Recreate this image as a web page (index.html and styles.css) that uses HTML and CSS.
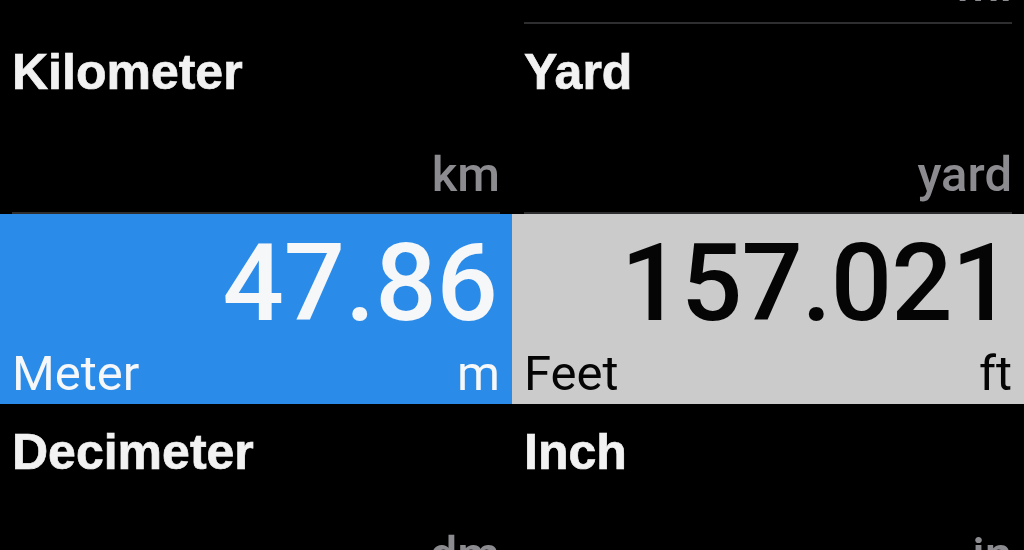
FILE: index.html
```html
<!DOCTYPE html>
<html lang="en">
<head>
<meta charset="utf-8">
<title>Length</title>
<link rel="stylesheet" href="styles.css">
</head>
<body>
<main class="units">
  <div class="cell cell-empty"></div>
  <div class="cell">
    <div class="cell-body">
      <div class="name">Mile</div>
      <div class="unit">mi</div>
    </div>
  </div>

  <div class="cell">
    <div class="cell-body">
      <div class="name">Kilometer</div>
      <div class="unit">km</div>
    </div>
  </div>
  <div class="cell">
    <div class="cell-body">
      <div class="name">Yard</div>
      <div class="unit">yard</div>
    </div>
  </div>

  <div class="cell cell-active">
    <div class="value">47.86</div>
    <div class="foot"><span class="label">Meter</span><span class="label">m</span></div>
  </div>
  <div class="cell cell-linked">
    <div class="value">157.021</div>
    <div class="foot"><span class="label">Feet</span><span class="label">ft</span></div>
  </div>

  <div class="cell">
    <div class="cell-body">
      <div class="name">Decimeter</div>
      <div class="unit">dm</div>
    </div>
  </div>
  <div class="cell">
    <div class="cell-body">
      <div class="name">Inch</div>
      <div class="unit">in</div>
    </div>
  </div>
</main>
</body>
</html>
```
FILE: styles.css
```css
html, body {
  margin: 0;
  padding: 0;
  background: #000;
  overflow: hidden;
}

body {
  width: 1024px;
  height: 550px;
  font-family: Roboto, "Liberation Sans", sans-serif;
}

/* two-column unit list, scrolled so the Mile row is mostly off the top */
.units {
  display: grid;
  grid-template-columns: 512px 512px;
  grid-auto-rows: 190px;
  margin-top: -166px;
}

.cell {
  display: flex;
  flex-direction: column;
  box-sizing: border-box;
  height: 190px;
}

.cell-body {
  flex: 1;
  display: flex;
  flex-direction: column;
  justify-content: space-between;
  margin: 0 12px;
  padding: 23px 0 13px;
  border-bottom: 2px solid #2e2e31;
}

.cell-empty .cell-body { border: 0; }

.name {
  font-family: "Liberation Sans", Arial, sans-serif;
  font-weight: 700;
  font-size: 50px;
  line-height: 50px;
  color: #f2f2f2;
  -webkit-text-stroke: 0.7px #f2f2f2;
}

.unit {
  align-self: flex-end;
  font-size: 49px;
  line-height: 49px;
  font-weight: 500;
  color: #8c8c90;
}

/* selected pair: the edited unit and the one it converts to */
.cell-active,
.cell-linked {
  justify-content: space-between;
  padding: 15px 12px 6px;
}

.cell-active {
  background: #2b8be9;
  color: #f5f7f9;
}

.cell-linked {
  background: #cbcbcb;
  color: #050505;
}

.value {
  text-align: right;
  font-size: 108px;
  line-height: 108px;
  font-weight: 500;
  padding-right: 2px;
}

.cell-linked .value {
  letter-spacing: -1px;
  padding-right: 0;
}

.foot {
  display: flex;
  justify-content: space-between;
}

.label {
  font-size: 49px;
  line-height: 49px;
}
```
